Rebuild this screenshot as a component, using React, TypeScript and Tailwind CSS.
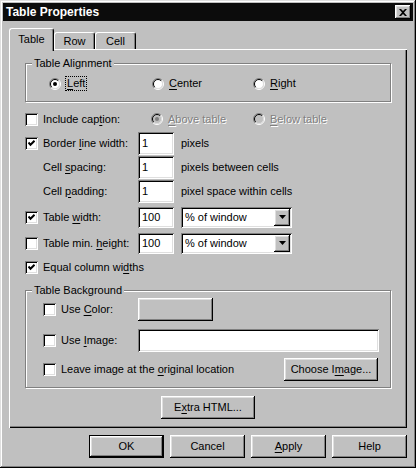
import React from "react";

// win95 bevels
const raised =
  "shadow-[inset_-1px_-1px_#000,inset_1px_1px_#fff,inset_-2px_-2px_#808080,inset_2px_2px_#dfdfdf]";
const sunken =
  "shadow-[inset_1px_1px_#808080,inset_-1px_-1px_#fff,inset_2px_2px_#000,inset_-2px_-2px_#dfdfdf]";
const disabledText = "text-[#808080] [text-shadow:1px_1px_0_#fff]";

const U = ({ children }: { children: React.ReactNode }) => <span className="underline underline-offset-[2px]">{children}</span>;

function Radio({ checked, disabled }: { checked?: boolean; disabled?: boolean }) {
  return (
    <svg width="12" height="12" viewBox="0 0 12 12" className="shrink-0">
      <circle cx="6" cy="6" r="4.5" fill={disabled ? "#c0c0c0" : "#fff"} />
      <path d="M2.1 9.9A5.5 5.5 0 0 1 9.9 2.1" stroke="#808080" fill="none" />
      <path d="M9.9 2.1A5.5 5.5 0 0 1 2.1 9.9" stroke="#fff" fill="none" />
      <path d="M2.8 9.2A4.5 4.5 0 0 1 9.2 2.8" stroke="#000" fill="none" />
      <path d="M9.2 2.8A4.5 4.5 0 0 1 2.8 9.2" stroke="#dfdfdf" fill="none" />
      {checked && <circle cx="6" cy="6" r="2" fill={disabled ? "#808080" : "#000"} />}
    </svg>
  );
}

function Check({ checked }: { checked?: boolean }) {
  return (
    <span className={`flex h-[13px] w-[13px] shrink-0 items-center justify-center bg-white ${sunken}`}>
      {checked && (
        <svg width="7" height="7" viewBox="0 0 7 7">
          <path d="M0.5 2.5L2.5 4.8L6.5 0.8" stroke="#000" strokeWidth="2" fill="none" />
        </svg>
      )}
    </span>
  );
}

function Field({ value, className }: { value?: string; className: string }) {
  return (
    <div className={`flex items-center bg-white pl-[4px] ${sunken} ${className}`}>{value}</div>
  );
}

function Select() {
  return (
    <div className={`flex h-[21px] w-[111px] items-center bg-white p-[2px] ${sunken}`}>
      <span className="flex-1 pl-[2px]">% of window</span>
      <span className={`flex h-[17px] w-[16px] items-center justify-center bg-[#c0c0c0] ${raised}`}>
        <svg width="7" height="4" viewBox="0 0 7 4">
          <path d="M0 0h7L3.5 4z" fill="#000" />
        </svg>
      </span>
    </div>
  );
}

function Button({ children, className }: { children?: React.ReactNode; className: string }) {
  return (
    <button className={`flex h-[23px] items-center justify-center bg-[#c0c0c0] ${raised} ${className}`}>
      {children}
    </button>
  );
}

function Group({ label, className, children }: { label: string; className: string; children: React.ReactNode }) {
  return (
    <div className={`relative border border-[#808080] shadow-[inset_1px_1px_#fff,1px_1px_#fff] ${className}`}>
      <span className="absolute -top-[7px] left-[6px] bg-[#c0c0c0] px-[2px] leading-[13px]">{label}</span>
      {children}
    </div>
  );
}

export default function App() {
  return (
    <div className="flex h-[468px] w-[416px] flex-col bg-[#c0c0c0] p-[3px] font-['Liberation_Sans',Arial,sans-serif] text-[11px] leading-none text-black shadow-[inset_-1px_-1px_#000,inset_1px_1px_#dfdfdf,inset_-2px_-2px_#808080,inset_2px_2px_#fff]">
      {/* Title bar */}
      <div className="flex h-[18px] items-center justify-between bg-[#0c0c0c] pl-[3px] pr-[2px]">
        <span className="text-[12px] font-bold text-white">Table Properties</span>
        <button className={`flex h-[14px] w-[16px] items-center justify-center bg-[#c0c0c0] ${raised}`}>
          <svg width="8" height="7" viewBox="0 0 8 7">
            <path d="M0 0h2l2 2 2-2h2L5 3.5 8 7H6L4 5 2 7H0l3-3.5z" fill="#000" />
          </svg>
        </button>
      </div>

      {/* Tabs */}
      <div className="mt-[7px] flex h-[21px] items-end px-[6px]">
        <div className="relative z-10 mb-[-2px] flex h-[23px] w-[45px] items-center justify-center rounded-t-[3px] border-l border-r border-t border-l-white border-r-black border-t-white bg-[#c0c0c0] pb-[2px] shadow-[inset_-1px_0_#808080]">
          Table
        </div>
        <div className="flex h-[17px] w-[41px] items-center justify-center rounded-t-[3px] border-l border-r border-t border-l-white border-r-black border-t-white shadow-[inset_-1px_0_#808080]">
          Row
        </div>
        <div className="flex h-[17px] w-[41px] items-center justify-center rounded-t-[3px] border-l border-r border-t border-l-white border-r-black border-t-white shadow-[inset_-1px_0_#808080]">
          Cell
        </div>
      </div>

      {/* Panel */}
      <div className="mx-[6px] flex h-[379px] flex-col px-[16px] shadow-[inset_1px_1px_#fff,inset_-1px_-1px_#000,inset_-2px_-2px_#808080]">
        <Group label="Table Alignment" className="mt-[14px] h-[39px]">
          <div className="flex h-full items-center pl-[23px] pt-[2px]">
            <div className="flex w-[103px] items-center gap-[4px]">
              <Radio checked />
              <span className="border border-dotted border-black px-[1px] py-[1px]">
                <U>L</U>eft
              </span>
            </div>
            <div className="flex w-[101px] items-center gap-[5px]">
              <Radio />
              <span>
                <U>C</U>enter
              </span>
            </div>
            <div className="flex items-center gap-[5px]">
              <Radio />
              <span>
                <U>R</U>ight
              </span>
            </div>
          </div>
        </Group>

        <div className="mt-[5px] flex h-[24px] items-center">
          <div className="flex w-[126px] items-center gap-[5px]">
            <Check />
            <span>
              Include cap<U>t</U>ion:
            </span>
          </div>
          <div className="flex w-[102px] items-center gap-[5px]">
            <Radio checked disabled />
            <span className={disabledText}>
              <U>A</U>bove table
            </span>
          </div>
          <div className="flex items-center gap-[5px]">
            <Radio disabled />
            <span className={disabledText}>
              <U>B</U>elow table
            </span>
          </div>
        </div>

        <div className="flex h-[24px] items-center">
          <div className="flex w-[113px] items-center gap-[5px]">
            <Check checked />
            <span>
              Border <U>l</U>ine width:
            </span>
          </div>
          <Field value="1" className="h-[23px] w-[36px]" />
          <span className="ml-[7px]">pixels</span>
        </div>

        <div className="flex h-[24px] items-center">
          <div className="w-[113px] pl-[18px]">
            Cell <U>s</U>pacing:
          </div>
          <Field value="1" className="h-[23px] w-[36px]" />
          <span className="ml-[7px]">pixels between cells</span>
        </div>

        <div className="flex h-[24px] items-center">
          <div className="w-[113px] pl-[18px]">
            Cell <U>p</U>adding:
          </div>
          <Field value="1" className="h-[23px] w-[36px]" />
          <span className="ml-[7px]">pixel space within cells</span>
        </div>

        <div className="mt-[2px] flex h-[24px] items-center">
          <div className="flex w-[113px] items-center gap-[5px]">
            <Check checked />
            <span>
              Table <U>w</U>idth:
            </span>
          </div>
          <Field value="100" className="h-[21px] w-[36px]" />
          <div className="ml-[7px]">
            <Select />
          </div>
        </div>

        <div className="mt-[2px] flex h-[24px] items-center">
          <div className="flex w-[113px] items-center gap-[5px]">
            <Check />
            <span>
              Table min. <U>h</U>eight:
            </span>
          </div>
          <Field value="100" className="h-[21px] w-[36px]" />
          <div className="ml-[7px]">
            <Select />
          </div>
        </div>

        <div className="flex h-[24px] items-center gap-[5px]">
          <Check checked />
          <span>
            Equal column wi<U>d</U>ths
          </span>
        </div>

        <Group label="Table Background" className="mt-[11px] h-[98px]">
          <div className="flex flex-col pl-[17px] pr-[11px]">
            <div className="mt-[7px] flex h-[23px] items-center">
              <div className="flex w-[95px] items-center gap-[5px]">
                <Check />
                <span>
                  Use <U>C</U>olor:
                </span>
              </div>
              <Button className="w-[75px]" />
            </div>
            <div className="mt-[8px] flex h-[23px] items-center">
              <div className="flex w-[95px] items-center gap-[5px]">
                <Check />
                <span>
                  Use <U>I</U>mage:
                </span>
              </div>
              <Field className="h-[23px] w-[242px]" />
            </div>
            <div className="mt-[6px] flex h-[23px] items-center justify-between">
              <div className="flex items-center gap-[5px]">
                <Check />
                <span>
                  Leave image at the <U>o</U>riginal location
                </span>
              </div>
              <Button className="mr-[1px] w-[94px]">
                <span>
                  Choose I<U>m</U>age...
                </span>
              </Button>
            </div>
          </div>
        </Group>

        <Button className="mt-[8px] w-[94px] self-center">
          <span>
            E<U>x</U>tra HTML...
          </span>
        </Button>
      </div>

      {/* Dialog buttons */}
      <div className="mt-[7px] flex justify-end gap-[6px] px-[6px]">
        <Button className="w-[75px] border border-black">OK</Button>
        <Button className="w-[75px]">Cancel</Button>
        <Button className="w-[75px]">
          <span>
            <U>A</U>pply
          </span>
        </Button>
        <Button className="w-[75px]">Help</Button>
      </div>
    </div>
  );
}
